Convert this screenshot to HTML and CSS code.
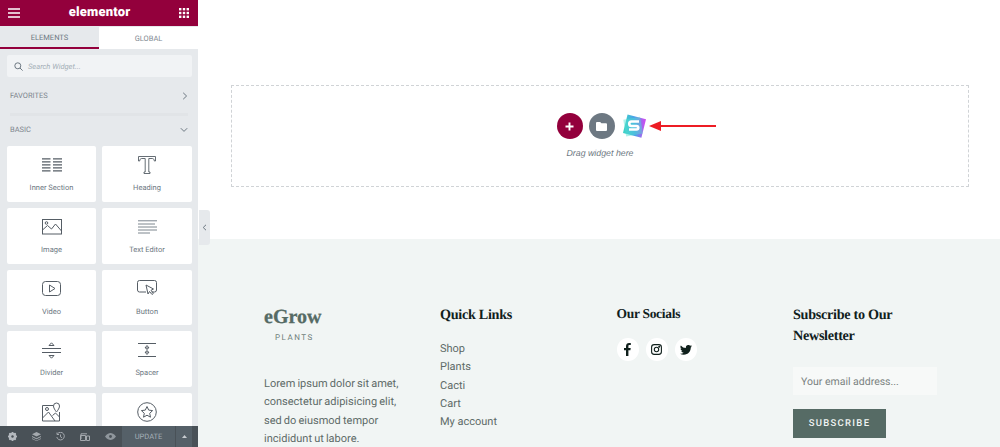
FILE: index.html
```html
<!DOCTYPE html>
<html lang="en">
<head>
    <meta charset="UTF-8">
    <meta name="viewport" content="width=device-width, initial-scale=1.0">
    <title>Elementor</title>
    <link rel="stylesheet" href="styles.css">
</head>
<body>
    <div class="editor">
        <aside class="panel">
            <header class="panel-head">
                <svg class="head-icon" width="12" height="10" viewBox="0 0 12 10"><path d="M0 1h12M0 5h12M0 9h12" stroke="#fff" stroke-width="1.7"/></svg>
                <span class="brand">elementor</span>
                <svg class="head-icon" width="10" height="10" viewBox="0 0 10 10" fill="#fff"><rect width="2.4" height="2.4"/><rect x="3.8" width="2.4" height="2.4"/><rect x="7.6" width="2.4" height="2.4"/><rect y="3.8" width="2.4" height="2.4"/><rect x="3.8" y="3.8" width="2.4" height="2.4"/><rect x="7.6" y="3.8" width="2.4" height="2.4"/><rect y="7.6" width="2.4" height="2.4"/><rect x="3.8" y="7.6" width="2.4" height="2.4"/><rect x="7.6" y="7.6" width="2.4" height="2.4"/></svg>
            </header>
            <nav class="tabs">
                <div class="tab active">ELEMENTS</div>
                <div class="tab">GLOBAL</div>
            </nav>
            <div class="search">
                <svg width="9" height="9" viewBox="0 0 9 9" fill="none" stroke="#6d7882" stroke-width="1"><circle cx="3.8" cy="3.8" r="3"/><path d="M6 6l2.6 2.6"/></svg>
                <span>Search Widget...</span>
            </div>
            <div class="group-title fav">
                <span>FAVORITES</span>
                <svg width="6" height="8" viewBox="0 0 6 8" fill="none" stroke="#6d7882" stroke-width="1"><path d="M1.2 .8L4.6 4 1.2 7.2"/></svg>
            </div>
            <div class="group-line"></div>
            <div class="group-title basic">
                <span>BASIC</span>
                <svg width="8" height="6" viewBox="0 0 8 6" fill="none" stroke="#6d7882" stroke-width="1"><path d="M.8 1.2L4 4.4l3.2-3.2"/></svg>
            </div>
            <div class="widgets">
                <div class="widget">
                    <div class="widget-icon"><svg width="20" height="15" viewBox="0 0 20 15" stroke="#555d65" stroke-width="1.2"><path d="M0 .8h8.500M0 3.800h8.500M0 6.800h8.500M0 9.800h8.500M0 12.800h8.500M11 .8h9M11 3.800h9M11 6.800h9M11 9.800h9M11 12.800h9"/></svg></div>
                    <span>Inner Section</span>
                </div>
                <div class="widget">
                    <div class="widget-icon"><svg width="18" height="18" viewBox="0 0 18 18" fill="none" stroke="#555d65" stroke-width=".9"><path d="M.5 .5h17v4.500h-1.200c0-1.500-.8-2.500-2-2.500h-3.500v13.500h1.200v1.500H6v-1.500h1.200V2.500H3.700c-1.200 0-2 1-2 2.500H.5z"/></svg></div>
                    <span>Heading</span>
                </div>
                <div class="widget">
                    <div class="widget-icon"><svg width="20" height="16" viewBox="0 0 20 16" fill="none" stroke="#555d65" stroke-width="1"><rect x=".5" y=".5" width="19" height="14.500"/><circle cx="4.500" cy="4" r="1.300"/><path d="M.5 11l5-4.500 4 3.500 4-5 6 7"/></svg></div>
                    <span>Image</span>
                </div>
                <div class="widget">
                    <div class="widget-icon"><svg width="19" height="14" viewBox="0 0 19 14" stroke="#6d7882" stroke-width=".9"><path d="M0 .8h19M0 4h17M0 7h19M0 10h19M0 13h12"/></svg></div>
                    <span>Text Editor</span>
                </div>
                <div class="widget">
                    <div class="widget-icon"><svg width="19" height="15" viewBox="0 0 19 15" fill="none" stroke="#555d65" stroke-width="1"><rect x=".5" y=".5" width="18" height="14" rx="3"/><path d="M7.500 4l5.500 3.500-5.500 3.500z"/></svg></div>
                    <span>Video</span>
                </div>
                <div class="widget">
                    <div class="widget-icon"><svg width="20" height="17" viewBox="0 0 20 17" fill="none" stroke="#555d65" stroke-width="1"><path d="M9 12H2.500a2 2 0 0 1-2-2V2.500a2 2 0 0 1 2-2h15a2 2 0 0 1 2 2V10a2 2 0 0 1-2 2h-3"/><path d="M9 5l2 9 1.500-2.500 2.500 3 1.500-1.200-2.500-3 2.500-1.300z"/></svg></div>
                    <span>Button</span>
                </div>
                <div class="widget">
                    <div class="widget-icon"><svg width="19" height="17" viewBox="0 0 19 17" fill="none" stroke="#555d65" stroke-width="1"><path d="M0 6.500h19M0 10.500h19M9.500 .8L7 3.500h5zM9.500 16.200L7 13.500h5z"/></svg></div>
                    <span>Divider</span>
                </div>
                <div class="widget">
                    <div class="widget-icon"><svg width="18" height="14" viewBox="0 0 18 14" fill="none" stroke="#555d65" stroke-width="1"><path d="M0 .5h18M0 13.500h18M9 2.500L7 5h4zM9 11.500L7 9h4zM9 5v4"/></svg></div>
                    <span>Spacer</span>
                </div>
                <div class="widget">
                    <div class="widget-icon"><svg width="19" height="20" viewBox="0 0 19 20" fill="none" stroke="#555d65" stroke-width="1"><path d="M11 3.500H.5v15.500h17V10M.5 16l6-6 6.500 9M10.500 13.500l3-2.500 4 4"/><circle cx="5" cy="7" r="1.500"/><path d="M14.500 10s-3-3.500-3-6a3 3 0 0 1 6 0c0 2.500-3 6-3 6z"/></svg></div>
                </div>
                <div class="widget">
                    <div class="widget-icon"><svg width="20" height="20" viewBox="0 0 20 20" fill="none" stroke="#555d65" stroke-width="1"><circle cx="10" cy="10" r="9.300"/><path d="M10 4.500l1.700 3.600 3.900.5-2.900 2.700.8 3.900-3.500-2-3.500 2 .8-3.900-2.900-2.700 3.900-.5z"/></svg></div>
                </div>
            </div>
            <footer class="panel-foot">
                <svg width="9" height="9" viewBox="0 0 9 9"><circle cx="4.500" cy="4.500" r="2.800" fill="none" stroke="#b4b9be" stroke-width="2.200"/><path d="M4.500 0v9M0 4.500h9M1.300 1.300l6.400 6.400M7.700 1.300L1.300 7.700" stroke="#b4b9be" stroke-width="1.300"/><circle cx="4.500" cy="4.500" r="1.200" fill="#495157"/></svg>
                <svg width="9" height="9" viewBox="0 0 9 9" fill="#a4a9ae"><path d="M4.500 0L9 2.200 4.500 4.400 0 2.200z"/><path d="M0 4l4.500 2.200L9 4v1L4.500 7.200 0 5z"/><path d="M0 6.200l4.500 2.200 4.500-2.200v.9L4.500 9 0 7.100z"/></svg>
                <svg width="9" height="9" viewBox="0 0 9 9" fill="none" stroke="#a4a9ae" stroke-width="1"><path d="M1.500 1.800A3.800 3.800 0 1 1 .8 5M4.500 2.500v2.300l1.500 .9"/><path d="M1 .5v2h2"/></svg>
                <svg width="10" height="8" viewBox="0 0 10 8" fill="none" stroke="#a4a9ae" stroke-width="1"><path d="M1 6V.8h6M.5 2.500h5V7.500h-5zM6.500 3h3v4.500h-3z"/></svg>
                <svg width="11" height="7" viewBox="0 0 11 7"><path d="M0 3.500C2 .8 4 0 5.500 0S9 .8 11 3.500C9 6.200 7 7 5.500 7S2 6.200 0 3.500z" fill="#8f969c"/><circle cx="5.500" cy="3.500" r="1.400" fill="#495157"/></svg>
                <div class="update">UPDATE</div>
                <div class="update-more">
                    <svg width="5" height="3" viewBox="0 0 5 3" fill="#c8ccd0"><path d="M2.500 0L5 3H0z"/></svg>
                </div>
            </footer>
        </aside>

        <div class="collapse-tab">
            <svg width="5" height="7" viewBox="0 0 5 7" fill="none" stroke="#6d7882" stroke-width="1"><path d="M4 .8L1.200 3.500 4 6.200"/></svg>
        </div>

        <main class="canvas">
            <section class="drop-wrap">
                <div class="dropzone">
                    <div class="drop-buttons">
                        <div class="round-btn add">
                            <svg width="9" height="9" viewBox="0 0 9 9"><path d="M4.500 .5v8M.5 4.500h8" stroke="#fff" stroke-width="1.900"/></svg>
                        </div>
                        <div class="round-btn folder">
                            <svg width="11" height="9" viewBox="0 0 11 9" fill="#fff"><path d="M1 0h3.200l1.200 1.300H10a1 1 0 0 1 1 1V8a1 1 0 0 1-1 1H1a1 1 0 0 1-1-1V1a1 1 0 0 1 1-1z"/></svg>
                        </div>
                        <div class="logo-wrap">
                            <svg width="26" height="26" viewBox="0 0 26 26">
                                <defs>
                                    <linearGradient id="logoGrad" x1="0" y1="0.6" x2="1" y2="0.3">
                                        <stop offset="0" stop-color="#3ed0c9"/>
                                        <stop offset="0.5" stop-color="#4aa0ea"/>
                                        <stop offset="1" stop-color="#c84ff0"/>
                                    </linearGradient>
                                </defs>
                                <rect x="4" y="3.500" width="19" height="19" transform="rotate(14 13 13)" fill="url(#logoGrad)"/>
                                <rect x="3.500" y="5" width="17" height="17" transform="rotate(-10 13 13)" fill="#52e0d0" opacity=".45"/>
                                <path d="M18 8.500h-7.500a2 2 0 0 0 0 4.500h5a1.700 1.700 0 0 1 0 3.500H8" fill="none" stroke="#fff" stroke-width="2.600"/>
                            </svg>
                            <svg class="arrow" width="67" height="10" viewBox="0 0 67 10"><path d="M8 5h59" stroke="#ed1c24" stroke-width="2.200"/><path d="M0 5l12-5v10z" fill="#ed1c24"/></svg>
                        </div>
                    </div>
                    <p class="drop-text">Drag widget here</p>
                </div>
            </section>

            <footer class="site-foot">
                <div class="foot-col">
                    <div class="logo-name">eGrow</div>
                    <div class="logo-sub">PLANTS</div>
                    <p class="about">Lorem ipsum dolor sit amet, consectetur adipisicing elit, sed do eiusmod tempor incididunt ut labore.</p>
                </div>
                <div class="foot-col">
                    <h4 class="foot-title">Quick Links</h4>
                    <ul class="links">
                        <li>Shop</li>
                        <li>Plants</li>
                        <li>Cacti</li>
                        <li>Cart</li>
                        <li>My account</li>
                    </ul>
                </div>
                <div class="foot-col">
                    <h4 class="foot-title socials-title">Our Socials</h4>
                    <div class="socials">
                        <div class="social">
                            <svg width="7" height="13" viewBox="0 0 7 13" fill="#10201c"><path d="M2 13V7.200H0V5h2V3.300C2 1.200 3.200 0 5.100 0c.8 0 1.500.1 1.700.1v2H5.600c-1 0-1.200.5-1.200 1.200V5h2.300l-.3 2.200h-2V13z"/></svg>
                        </div>
                        <div class="social">
                            <svg width="11" height="11" viewBox="0 0 11 11" fill="none" stroke="#10201c" stroke-width="1.100"><rect x=".6" y=".6" width="9.800" height="9.800" rx="2.600"/><circle cx="5.500" cy="5.500" r="2.200"/><circle cx="8.200" cy="2.800" r=".4" fill="#10201c"/></svg>
                        </div>
                        <div class="social">
                            <svg width="12" height="10" viewBox="0 0 24 20" fill="#10201c"><path d="M24 2.400c-.9.400-1.800.7-2.800.8 1-.6 1.800-1.600 2.200-2.700-.9.600-2 1-3.100 1.200A4.900 4.900 0 0 0 11.900 6.200 14 14 0 0 1 1.700.9a4.900 4.900 0 0 0 1.500 6.600c-.8 0-1.600-.2-2.200-.6v.1c0 2.400 1.700 4.400 3.900 4.800-.7.200-1.500.2-2.200.1.600 2 2.400 3.400 4.600 3.400A9.900 9.900 0 0 1 0 17.300 14 14 0 0 0 7.500 19.500c9.100 0 14-7.500 14-14v-.6c1-.7 1.800-1.600 2.500-2.500z"/></svg>
                        </div>
                    </div>
                </div>
                <div class="foot-col">
                    <h4 class="foot-title news-title">Subscribe to Our Newsletter</h4>
                    <div class="email">Your email address...</div>
                    <div class="subscribe">SUBSCRIBE</div>
                </div>
            </footer>
        </main>
    </div>
</body>
</html>
```

FILE: styles.css
```css
html, body {
    margin: 0;
    padding: 0;
    height: 447px;
    overflow: hidden;
    background: #fff;
}

.editor {
    display: flex;
    position: relative;
    width: 1000px;
    height: 447px;
    overflow: hidden;
    font-family: "Roboto", sans-serif;
    text-rendering: geometricPrecision;
}

/* left panel */
.panel {
    position: relative;
    flex: 0 0 198px;
    height: 447px;
    overflow: hidden;
    background: #e6e9ec;
    color: #6d7882;
}

.panel-head {
    display: flex;
    align-items: center;
    justify-content: space-between;
    height: 26px;
    padding: 0 9px 0 8px;
    background: #93003c;
}

.brand {
    color: #fff;
    font-size: 13px;
    font-weight: 900;
    letter-spacing: .2px;
    margin-top: -1px;
}

.tabs {
    display: flex;
    height: 22px;
    margin-top: 1px;
}

.tab {
    flex: 1;
    display: flex;
    align-items: center;
    justify-content: center;
    background: #fff;
    color: #828a92;
    font-size: 7.5px;
}

.tab.active {
    background: #e6e9ec;
    border-bottom: 2px solid #93003c;
    color: #6d7882;
}

.search {
    display: flex;
    align-items: center;
    gap: 5px;
    height: 22px;
    margin: 6px 6px 0 7px;
    padding-left: 7px;
    background: #f1f3f5;
    border-radius: 2px;
    color: #a4afb7;
    font-size: 7.5px;
    font-style: italic;
}

.group-title {
    display: flex;
    align-items: center;
    justify-content: space-between;
    padding: 0 10px;
    font-size: 7.5px;
    color: #7d858d;
}

.group-title.fav {
    margin-top: 12px;
    height: 13px;
}

.group-line {
    height: 3px;
    margin: 11px 10px 0;
    background: #e1e4e7;
}

.group-title.basic {
    margin-top: 7px;
    height: 13px;
}

.widgets {
    display: grid;
    grid-template-columns: 89px 90px;
    grid-auto-rows: 55.75px;
    gap: 6px;
    margin: 10px 0 0 7px;
}

.widget {
    display: flex;
    flex-direction: column;
    align-items: center;
    padding-top: 9px;
    box-sizing: border-box;
    background: #fff;
    border-radius: 2px;
    font-size: 7.5px;
    line-height: 10px;
    color: #6d7882;
}

.widget-icon {
    display: flex;
    align-items: center;
    justify-content: center;
    height: 20px;
    margin-bottom: 8px;
}

.panel-foot {
    position: absolute;
    left: 0;
    right: 0;
    bottom: 0;
    display: flex;
    align-items: center;
    gap: 15px;
    height: 21px;
    padding-left: 8px;
    background: #495157;
}

.update {
    display: flex;
    align-items: center;
    justify-content: center;
    width: 53px;
    height: 21px;
    margin-left: -9px;
    background: #556068;
    color: #a4afb7;
    font-size: 7.5px;
}

.update-more {
    display: flex;
    align-items: center;
    justify-content: center;
    width: 16px;
    height: 21px;
    margin-left: -14px;
    background: #556068;
}

.collapse-tab {
    position: absolute;
    left: 199px;
    top: 210px;
    display: flex;
    align-items: center;
    justify-content: center;
    width: 11px;
    height: 35px;
    background: #e6e9ec;
    border-radius: 0 3px 3px 0;
}

/* page canvas */
.canvas {
    flex: 1;
    height: 447px;
    overflow: hidden;
}

.drop-wrap {
    height: 239px;
    padding: 85px 31px 0 33px;
    box-sizing: border-box;
}

.dropzone {
    height: 102px;
    box-sizing: border-box;
    border: 1px dashed #d0d3d6;
    display: flex;
    flex-direction: column;
    align-items: center;
    padding-top: 27px;
}

.drop-buttons {
    display: flex;
    align-items: center;
    gap: 6px;
    padding-left: 3px;
}

.round-btn {
    display: flex;
    align-items: center;
    justify-content: center;
    width: 26px;
    height: 26px;
    border-radius: 50%;
}

.round-btn.add {
    background: #93003c;
}

.round-btn.folder {
    background: #6d7882;
}

.logo-wrap {
    position: relative;
    width: 26px;
    height: 26px;
}

.arrow {
    position: absolute;
    left: 28.500px;
    top: 8px;
}

.drop-text {
    margin: 9px 0 0;
    font-family: "Liberation Sans", sans-serif;
    font-size: 8.800px;
    line-height: 11px;
    font-style: italic;
    color: #6d7882;
}

.site-foot {
    display: grid;
    grid-template-columns: 176px 176.500px 176.500px 150px;
    height: 208px;
    padding: 66px 0 0 66px;
    box-sizing: border-box;
    background: #f1f5f4;
    color: #566b65;
    font-family: "Roboto", sans-serif;
}

.logo-name {
    font-family: "Liberation Serif", serif;
    font-weight: 700;
    font-size: 20px;
    line-height: 24px;
    color: #566b65;
    -webkit-text-stroke: .3px #566b65;
}

.logo-sub {
    margin: 3px 0 0 11px;
    font-size: 8px;
    letter-spacing: 1.500px;
    line-height: 12px;
    color: #6f7f7a;
}

.about {
    width: 140px;
    margin: 31px 0 0;
    font-size: 11px;
    line-height: 18.300px;
    word-spacing: -.6px;
    color: #5e6b68;
}

.foot-title {
    margin: 0;
    font-family: "Liberation Serif", serif;
    font-size: 14.200px;
    font-weight: 700;
    letter-spacing: -.3px;
    line-height: 21px;
    color: #10201c;
}

.socials-title {
    font-size: 13.500px;
    margin-top: -2px;
}

.links {
    list-style: none;
    margin: 14px 0 0;
    padding: 0;
    font-size: 11px;
    line-height: 18.300px;
    color: #5e6b68;
}

.socials {
    display: flex;
    gap: 6.500px;
    margin-top: 14px;
}

.social {
    display: flex;
    align-items: center;
    justify-content: center;
    width: 22.500px;
    height: 23px;
    border-radius: 50%;
    background: #fff;
}

.news-title {
    width: 130px;
}

.email {
    display: flex;
    align-items: center;
    width: 144px;
    height: 28px;
    margin-top: 20px;
    padding-left: 8px;
    box-sizing: border-box;
    background: #f7f9f8;
    font-size: 10.500px;
    color: #7a8280;
}

.subscribe {
    display: flex;
    align-items: center;
    justify-content: center;
    width: 93px;
    height: 29px;
    margin-top: 14px;
    background: #566b65;
    color: #f1f5f4;
    font-size: 9.500px;
    font-weight: 500;
    letter-spacing: 1.300px;
}
```
